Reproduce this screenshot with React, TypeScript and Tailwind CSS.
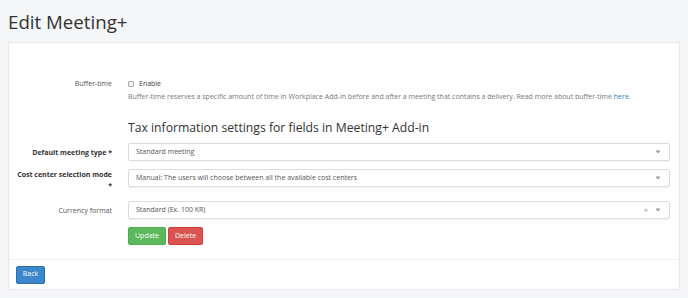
const Caret = () => (
  <svg width="6" height="4" viewBox="0 0 6 4" className="shrink-0">
    <path d="M0.5 0.5 L5.5 0.5 L3 3.5 Z" fill="#999" />
  </svg>
);

type SelectProps = { value: string; clearable?: boolean };

const SelectBox = ({ value, clearable }: SelectProps) => (
  <div className="flex h-[18px] flex-1 items-center rounded-[2px] border border-[#dcdcdc] bg-white pl-[7px] pr-[8px] shadow-[0_1px_1px_rgba(0,0,0,0.04)]">
    <span className="flex-1 truncate text-[7px] text-[#555]">{value}</span>
    {clearable && <span className="mr-[7px] text-[8px] leading-none text-[#999]">×</span>}
    <Caret />
  </div>
);

const Label = ({ children, bold }: { children: React.ReactNode; bold?: boolean }) => (
  <div
    className={`w-[103px] shrink-0 text-right text-[7px] leading-[11px] ${bold ? "font-bold text-[#333]" : "text-[#555]"}`}
  >
    {children}
  </div>
);

export default function App() {
  return (
    <div
      className="min-h-[298px] w-[688px] bg-[#f5f6f8] px-[8px] pt-[9px]"
      style={{ fontFamily: '"Open Sans", "Liberation Sans", sans-serif' }}
    >
      <h1 className="text-[18.7px] font-normal leading-[26px] text-[#333]">Edit Meeting+</h1>

      <div className="mt-[7px] flex h-[248px] w-[672px] flex-col rounded-[2px] border border-[#e6e8eb] bg-white">
        <div className="flex flex-1 flex-col pr-[9px] pt-[35px]">
          {/* buffer time */}
          <div className="flex items-start">
            <Label>Buffer-time</Label>
            <div className="ml-[16px] flex flex-col">
              <div className="flex items-center gap-[5px] text-[7px] leading-[11px] text-[#444]">
                <span className="inline-block h-[6px] w-[6px] rounded-[1px] border border-[#aaa] bg-[#f3f3f3]" />
                Enable
              </div>
              <p className="mt-[3px] text-[7px] leading-[10px] text-[#777]">
                Buffer-time reserves a specific amount of time in Workplace Add-in before and after a meeting that
                contains a delivery. Read more about buffer-time <span className="text-[#337ab7]">here</span>.
              </p>
            </div>
          </div>

          <div className="ml-[119px] mt-[17px] text-[12.2px] leading-[18px] text-[#333]">
            Tax information settings for fields in Meeting+ Add-in
          </div>

          <div className="mt-[6px] flex items-center">
            <Label bold>Default meeting type *</Label>
            <div className="ml-[16px] flex flex-1">
              <SelectBox value="Standard meeting" />
            </div>
          </div>

          <div className="mt-[8px] flex items-start">
            <Label bold>
              Cost center selection mode
              <br />*
            </Label>
            <div className="ml-[16px] flex flex-1">
              <SelectBox value="Manual: The users will choose between all the available cost centers" />
            </div>
          </div>

          <div className="mt-[10px] flex items-center">
            <Label>Currency format</Label>
            <div className="ml-[16px] flex flex-1">
              <SelectBox value="Standard (Ex. 100 KR)" clearable />
            </div>
          </div>

          <div className="ml-[119px] mt-[8px] flex gap-[2px]">
            <button className="h-[18px] rounded-[2px] border border-[#4cae4c] bg-[#5cb85c] px-[6px] text-[7px] text-white">
              Update
            </button>
            <button className="h-[18px] rounded-[2px] border border-[#d43f3a] bg-[#d9534f] px-[6px] text-[7px] text-white">
              Delete
            </button>
          </div>
        </div>

        <div className="flex h-[30px] items-center border-t border-[#eef0f2] px-[7px]">
          <button className="h-[18px] w-[29px] rounded-[2px] border border-[#2e6da4] bg-[#3a87cc] text-[7px] text-white">
            Back
          </button>
        </div>
      </div>
    </div>
  );
}
